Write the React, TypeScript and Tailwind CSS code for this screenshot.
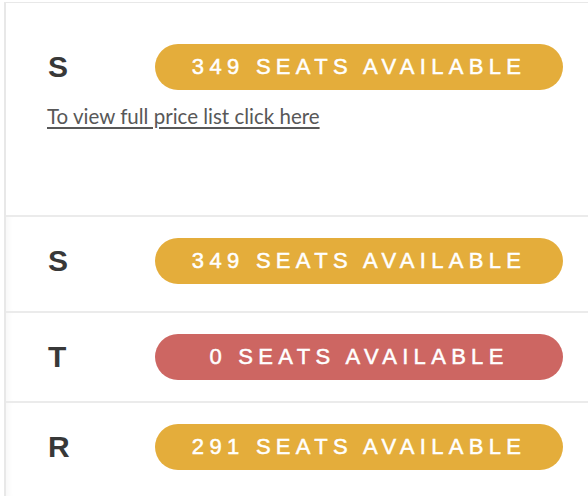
import React from 'react';

// rows of the seat table (heights include the 2px bottom border)
const rows = [
  { zone: 'S', seats: 349, h: 'h-[96px]' },
  { zone: 'T', seats: 0, h: 'h-[90px]' },
  { zone: 'R', seats: 291, h: 'h-[93px]' },
];

function SeatPill({ seats }: { seats: number }) {
  const bg = seats > 0 ? 'bg-[#e4ad3b]' : 'bg-[#cd6662]';
  return (
    <div
      className={`w-[408px] h-[46px] rounded-full flex items-center justify-center text-white text-[22px] tracking-[5.3px] leading-none [-webkit-text-stroke:0.5px_white] ${bg}`}
      style={{ fontFamily: '"Liberation Sans", Arial, sans-serif' }}
    >
      {seats} SEATS AVAILABLE
    </div>
  );
}

function ZoneLetter({ zone }: { zone: string }) {
  return (
    <div
      className="w-[107px] text-[30px] font-bold text-[#383838] leading-none"
      style={{ fontFamily: '"Liberation Sans", Arial, sans-serif' }}
    >
      {zone}
    </div>
  );
}

export default function App() {
  return (
    <div className="w-[588px] h-[496px] overflow-hidden bg-white pt-[2px] pl-[4px]">
      <div className="border-t border-l-2 border-[#e8e8e8] h-full">
        {/* first row with price list link */}
        <div className="h-[214px] border-b-2 border-[#ebebeb] pl-[42px] pt-[41px]">
          <div className="flex items-center">
            <ZoneLetter zone="S" />
            <SeatPill seats={349} />
          </div>
          <a
            href="#"
            className="block mt-[12px] text-[20.5px] text-[#585858] underline underline-offset-[3px] leading-[28px] w-fit -ml-[1px]"
            style={{ fontFamily: 'Lato, "Open Sans", sans-serif' }}
          >
            To view full price list click here
          </a>
        </div>

        {rows.map((r, i) => (
          <div
            key={i}
            className={`${r.h} ${i < rows.length - 1 ? 'border-b-2 border-[#ebebeb]' : ''} pl-[42px] pt-[21px] shadow-[inset_8px_0_8px_-8px_rgba(0,0,0,0.06)]`}
          >
            <div className="flex items-center">
              <ZoneLetter zone={r.zone} />
              <SeatPill seats={r.seats} />
            </div>
          </div>
        ))}
      </div>
    </div>
  );
}
